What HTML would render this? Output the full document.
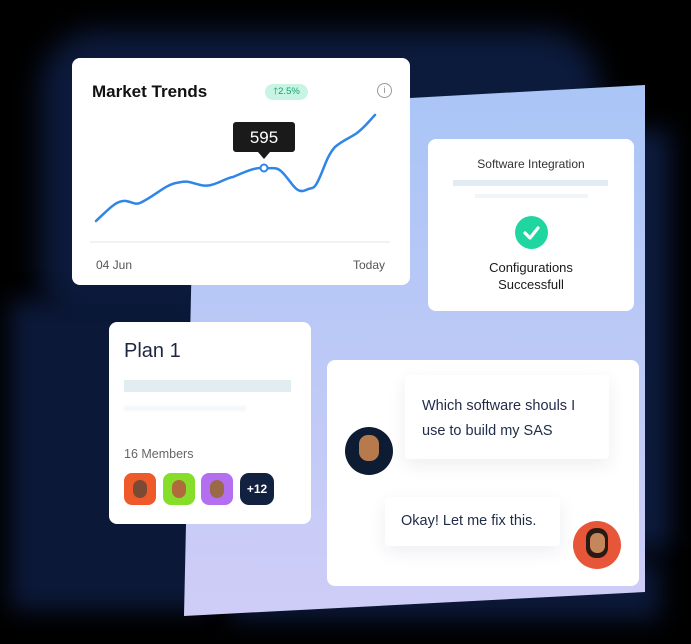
<!DOCTYPE html>
<html><head><meta charset="utf-8"><style>
*{margin:0;padding:0;box-sizing:border-box}
body{width:691px;height:644px;background:#000;position:relative;overflow:hidden;font-family:"Liberation Sans",sans-serif;color:#1d2740}
.abs{position:absolute}
.card{position:absolute;background:#fff;border-radius:8px}
.t{position:absolute;white-space:nowrap}
</style></head><body>
<div class="abs" style="left:40px;top:30px;width:560px;height:300px;background:#0c1a3c;border-radius:60px;filter:blur(14px)"></div>
<div class="abs" style="left:600px;top:130px;width:70px;height:420px;background:#0c1a3c;filter:blur(12px)"></div>
<div class="abs" style="left:10px;top:300px;width:200px;height:310px;background:#0b1838;filter:blur(12px)"></div>
<div class="abs" style="left:230px;top:560px;width:430px;height:60px;background:#0b1838;filter:blur(12px)"></div>
<svg class="abs" style="left:0;top:0" width="691" height="644">
<defs><linearGradient id="g" x1="0" y1="0" x2="0" y2="1"><stop offset="0" stop-color="#a9c5f6"/><stop offset="1" stop-color="#cfcdf7"/></linearGradient></defs>
<polygon points="195,110 645,85 645,592 184,616" fill="url(#g)"/>
</svg>
<div class="card" style="left:72px;top:58px;width:338px;height:227px">
<div class="t" style="left:20px;top:24px;font-size:17px;font-weight:bold;color:#111">Market Trends</div>
<div class="t" style="left:193px;top:26px;width:43px;height:16px;border-radius:8px;background:#c8f4e4;color:#1a9e6e;font-size:9.5px;line-height:16px;text-align:center">🡑2.5%</div>
<div class="t" style="left:305px;top:25px;width:15px;height:15px;border:1.3px solid #999;border-radius:50%;font-size:9px;color:#888;text-align:center;line-height:13px">i</div>
</div>
<svg class="abs" style="left:0;top:0" width="691" height="644">
<path d="M96,221 C108,210 116,200 126,201 C132,202 135,205 140,203 C155,196 165,185 176,183 C182,182 185,181 189,182 C198,184 203,187 211,185 C220,183 226,178 233,177 C245,172 255,167 264,168 C272,169 276,166 282,172 C292,182 296,195 306,190 C312,187 313,190 317,183 C324,170 326,157 335,147 C343,140 350,138 357,133 C366,126 370,120 375,115" fill="none" stroke="#2f86e8" stroke-width="2.5" stroke-linecap="round"/>
<circle cx="264" cy="168" r="3.5" fill="#fff" stroke="#2f86e8" stroke-width="2"/>
<line x1="90" y1="242" x2="390" y2="242" stroke="#eee" stroke-width="1.5"/>
<rect x="233" y="122" width="62" height="30" rx="3" fill="#1a1a1a"/>
<polygon points="258,152 270,152 264,159" fill="#1a1a1a"/>
<text x="264" y="143" font-size="17" fill="#fff" text-anchor="middle" font-family="Liberation Sans">595</text>
<text x="96" y="269" font-size="12" fill="#555" font-family="Liberation Sans">04 Jun</text>
<text x="385" y="269" font-size="12" fill="#555" text-anchor="end" font-family="Liberation Sans">Today</text>
</svg>
<div class="card" style="left:428px;top:139px;width:206px;height:172px">
<div class="t" style="left:0;width:206px;text-align:center;top:18px;font-size:12px;color:#333">Software Integration</div>
<div class="abs" style="left:25px;top:41px;width:155px;height:6px;background:#e0ecf2"></div>
<div class="abs" style="left:47px;top:55px;width:113px;height:4px;background:#f1f5f8"></div>
<div class="abs" style="left:87px;top:77px;width:33px;height:33px;border-radius:50%;background:#1fd6a0"></div>
<svg class="abs" style="left:87px;top:77px" width="33" height="33"><path d="M10,17 L15,22 L23,12" fill="none" stroke="#fff" stroke-width="3.2" stroke-linecap="round" stroke-linejoin="round"/></svg>
<div class="t" style="left:0;width:206px;text-align:center;top:120px;font-size:13px;line-height:17px;color:#1a1a1a">Configurations<br>Successfull</div>
</div>
<div class="card" style="left:109px;top:322px;width:202px;height:202px">
<div class="t" style="left:15px;top:18px;font-size:20px;color:#1d2740">Plan 1</div>
<div class="abs" style="left:15px;top:58px;width:167px;height:12px;background:#e2edf2"></div>
<div class="abs" style="left:15px;top:84px;width:122px;height:5px;background:#f3f7f9;filter:blur(1px)"></div>
<div class="t" style="left:15px;top:125px;font-size:12.5px;color:#666">16 Members</div>
<div class="abs" style="left:15px;top:151px;width:32px;height:32px;border-radius:8px;background:#ee5a2a"></div>
<div class="abs" style="left:54px;top:151px;width:32px;height:32px;border-radius:8px;background:#86dd2a"></div>
<div class="abs" style="left:92px;top:151px;width:32px;height:32px;border-radius:8px;background:#b46ef0"></div>
<div class="abs" style="left:131px;top:151px;width:34px;height:32px;border-radius:9px;background:#11213f;color:#fff;font-size:12px;font-weight:bold;text-align:center;line-height:32px">+12</div>
<div class="abs" style="left:24px;top:158px;width:14px;height:18px;border-radius:7px;background:#7a4a32"></div>
<div class="abs" style="left:63px;top:158px;width:14px;height:18px;border-radius:7px;background:#b06a3e"></div>
<div class="abs" style="left:101px;top:158px;width:14px;height:18px;border-radius:7px;background:#9a6a48"></div>
</div>
<div class="card" style="left:327px;top:360px;width:312px;height:226px">
<div class="abs" style="left:78px;top:15px;width:204px;height:84px;background:#fff;border-radius:4px;box-shadow:0 6px 18px rgba(30,40,80,.08)"></div>
<div class="t" style="left:95px;top:34px;font-size:14.5px;line-height:25px;color:#1f2b48">Which software shouls I<br>use to build my SAS</div>
<div class="abs" style="left:18px;top:67px;width:48px;height:48px;border-radius:50%;background:#0d1b33"></div>
<div class="abs" style="left:32px;top:75px;width:20px;height:26px;border-radius:9px;background:#b67a4c"></div>
<div class="abs" style="left:58px;top:137px;width:175px;height:49px;background:#fff;border-radius:4px;box-shadow:0 6px 18px rgba(30,40,80,.08)"></div>
<div class="t" style="left:74px;top:153px;font-size:14.5px;color:#1f2b48">Okay! Let me fix this.</div>
<div class="abs" style="left:246px;top:161px;width:48px;height:48px;border-radius:50%;background:#e8563a"></div>
<div class="abs" style="left:259px;top:168px;width:22px;height:30px;border-radius:10px;background:#2a1a14"></div>
<div class="abs" style="left:263px;top:173px;width:15px;height:20px;border-radius:7px;background:#c4865a"></div>
</div>
</body></html>
